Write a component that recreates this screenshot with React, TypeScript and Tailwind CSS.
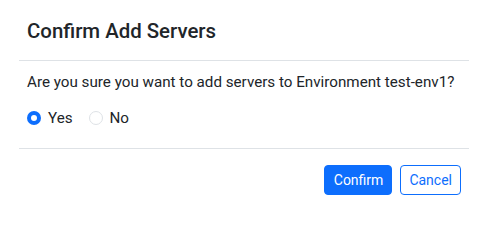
export default function App() {
  return (
    <div className="w-[488px] h-[215px] bg-white px-[19px] text-[#212529] font-['Roboto',sans-serif] overflow-hidden">
      <div className="border-b border-[#dee2e6] px-2 pt-4 pb-[14px]">
        <h5 className="text-[20.4px] leading-[30px] font-medium">Confirm Add Servers</h5>
      </div>
      <div className="px-2 pt-[10px] pb-[19px]">
        <p className="text-[15.2px] leading-[22px] whitespace-nowrap">
          Are you sure you want to add servers to Environment test-env1?
        </p>
        <div className="mt-[14px] flex items-center text-[15.2px] leading-[22px]">
          <label className="flex items-center gap-[7px]">
            <span className="w-[14px] h-[14px] rounded-full bg-[#0d6efd] flex items-center justify-center">
              <span className="w-[6px] h-[6px] rounded-full bg-white" />
            </span>
            Yes
          </label>
          <label className="flex items-center gap-[7px] ml-4">
            <span className="w-[14px] h-[14px] rounded-full border border-[#dee2e6] bg-white" />
            No
          </label>
        </div>
      </div>
      <div className="border-t border-[#dee2e6] flex justify-end gap-2 pr-2 pt-4">
        <button className="h-[30px] pl-[9px] pr-2 rounded bg-[#0d6efd] border border-[#0d6efd] text-white text-[14px] leading-[21px]">
          Confirm
        </button>
        <button className="h-[30px] px-2 rounded bg-white border border-[#0d6efd] text-[#0d6efd] text-[14px] leading-[21px]">
          Cancel
        </button>
      </div>
    </div>
  );
}
